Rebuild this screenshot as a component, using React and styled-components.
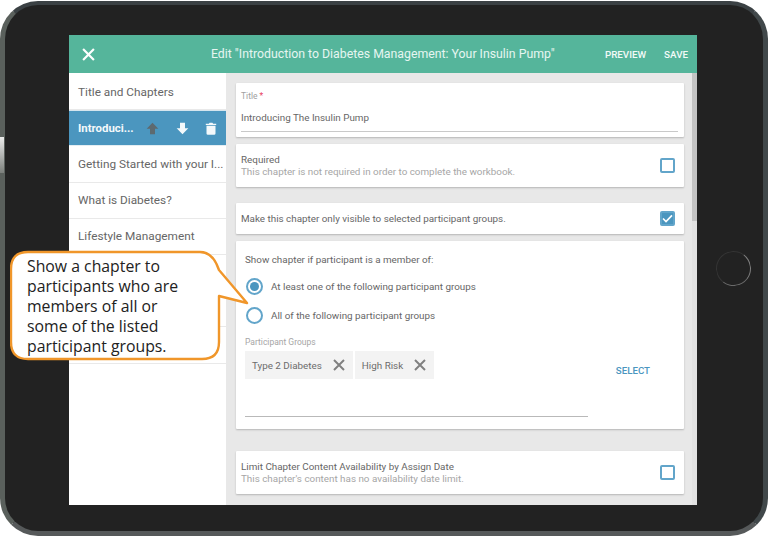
import React from "react";
import styled, { createGlobalStyle } from "styled-components";

const Global = createGlobalStyle`
  html, body { margin: 0; padding: 0; background: #fff; overflow: hidden; }
  * { box-sizing: border-box; }
  #root { width: 768px; height: 537px; padding-top: 1px; font-family: Roboto, sans-serif; }
`;

const Tablet = styled.div`
  position: relative;
  width: 768px;
  height: 535px;
  padding: 30px 66px 26px 64px;
  background: #222222;
  border-style: solid;
  border-width: 4px 5px 5px 5px;
  border-color: #3b4144 #41484a #56595a #5a605c;
  border-radius: 38px;
`;

const SideGlint = styled.div`
  position: absolute;
  left: -5px;
  top: 132px;
  width: 4px;
  height: 36px;
  background: linear-gradient(#ececec, #7b7f7b);
`;

const HomeButton = styled.div`
  position: absolute;
  left: 711px;
  top: 246px;
  width: 35px;
  height: 35px;
  border-radius: 50%;
  border: 1.5px solid #343434;
  border-right-color: #7d7d7d;
  border-bottom-color: #6a6a6a;
  transform: rotate(-8deg);
`;

const Screen = styled.div`
  width: 628px;
  height: 470px;
  display: flex;
  flex-direction: column;
  overflow: hidden;
  background: #e8e8e8;
`;

const Header = styled.header`
  flex: 0 0 38px;
  display: flex;
  align-items: center;
  background: #55b59b;
  color: #fff;
`;

const CloseButton = styled.div`
  flex: 0 0 39px;
  display: flex;
  justify-content: center;
  color: #fff;
`;

const HeaderTitle = styled.div`
  flex: 1;
  padding-left: 103px;
  font-size: 12.3px;
  white-space: nowrap;
  color: #e6f5f1;
`;

const HeaderAction = styled.div`
  font-size: 9.8px;
  font-weight: 500;
  margin-right: ${(p) => p.$mr}px;
  color: #f2faf8;
`;

const Body = styled.div`
  flex: 1;
  display: flex;
  min-height: 0;
`;

const Sidebar = styled.nav`
  flex: 0 0 157px;
  width: 157px;
  min-width: 0;
  padding-top: 1px;
  background: #fff;
`;

const NavRow = styled.div`
  height: 36.2px;
  display: flex;
  align-items: center;
  padding: 0 4px 0 9px;
  font-size: 11.8px;
  color: #666;
  border-bottom: 1px solid #e9e9e9;
  white-space: nowrap;
  overflow: hidden;
`;

const ActiveRow = styled(NavRow)`
  background: #4b96bf;
  color: #f4f9fb;
  font-weight: 700;
  border-bottom: 1px solid #e4eef3;
  border-top: 1px solid #d5e5ee;
`;

const ActiveLabel = styled.span`
  flex: 0 0 56px;
  font-size: 11.4px;
`;

const RowIcons = styled.div`
  display: flex;
  gap: 16.5px;
  margin-left: 12px;
`;

const Main = styled.main`
  position: relative;
  flex: 1;
  min-width: 0;
  padding: 10px 13px 0 10px;
  display: flex;
  flex-direction: column;
  background: #e8e8e8;
  overflow: hidden;
`;

const Scrollbar = styled.div`
  position: absolute;
  right: 0;
  top: 0;
  bottom: 0;
  width: 5px;
  background: #e2e2e2;
  &::after {
    content: "";
    display: block;
    height: 148px;
    background: #c4c4c4;
  }
`;

const Card = styled.section`
  flex: none;
  background: #fff;
  border-radius: 1px;
  box-shadow: 0 1px 2px rgba(0, 0, 0, 0.22);
  margin-bottom: ${(p) => p.$mb}px;
`;

const TitleCard = styled(Card)`
  height: 54px;
  padding: 8px 6px 0 5px;
`;

const FieldLabel = styled.div`
  font-size: 8.5px;
  color: #a0a0a0;
  line-height: 11px;
`;

const Req = styled.span`
  color: #e8415f;
`;

const FieldValue = styled.div`
  font-size: 9.85px;
  color: #666;
  line-height: 13px;
  margin-top: 9px;
  padding-bottom: 7px;
  border-bottom: 1px solid #c9c9c9;
`;

const ToggleCard = styled(Card)`
  height: ${(p) => p.$h}px;
  display: flex;
  align-items: center;
  justify-content: space-between;
  padding: 0 9px 0 5px;
`;

const ToggleMain = styled.div`
  font-size: 9.85px;
  line-height: 13px;
  color: #666;
`;

const ToggleSub = styled.div`
  font-size: 9.85px;
  line-height: 12.5px;
  color: #a6a6a6;
`;

const Checkbox = styled.div`
  width: 15px;
  height: 15px;
  border: 2px solid #62a5ca;
  border-radius: 2px;
  background: ${(p) => (p.$on ? "#4b96bf" : "#fff")};
  display: flex;
  align-items: center;
  justify-content: center;
`;

const GroupCard = styled(Card)`
  height: 188px;
  padding: 12px 9px 0 9px;
`;

const GroupHeading = styled.div`
  font-size: 9.85px;
  line-height: 13px;
  color: #666;
  margin-bottom: 12px;
`;

const RadioRow = styled.div`
  display: flex;
  align-items: center;
  gap: 8px;
  height: 17px;
  margin-bottom: 12px;
  margin-left: 1px;
  font-size: 9.85px;
  color: #666;
`;

const Radio = styled.div`
  width: 17px;
  height: 17px;
  border-radius: 50%;
  border: 2px solid #62a5ca;
  display: flex;
  align-items: center;
  justify-content: center;
  &::after {
    content: "";
    display: ${(p) => (p.$on ? "block" : "none")};
    width: 9px;
    height: 9px;
    border-radius: 50%;
    background: #4b96bf;
  }
`;

const GroupsLabel = styled.div`
  font-size: 8.5px;
  line-height: 11px;
  color: #a6a6a6;
  margin-top: 13px;
`;

const PickerRow = styled.div`
  display: flex;
  align-items: flex-start;
  justify-content: space-between;
  margin-top: 3px;
`;

const PickerBox = styled.div`
  width: 343px;
  height: 66px;
  border-bottom: 1px solid #b9b9b9;
  display: flex;
  align-items: flex-start;
  gap: 2px;
`;

const Chip = styled.div`
  height: 28px;
  background: #f3f3f3;
  display: flex;
  align-items: center;
  padding: 0 8px 0 7px;
  gap: 11px;
  font-size: 9.85px;
  color: #6c6c6c;
`;

const SelectLink = styled.div`
  font-size: 9.7px;
  font-weight: 500;
  color: #4b96bf;
  margin: 14px 25px 0 0;
`;

const Callout = styled.div`
  position: absolute;
  left: 5px;
  top: 243px;
  width: 240px;
  height: 115px;
`;

const CalloutShape = styled.svg`
  position: absolute;
  inset: 0;
`;

const CalloutText = styled.div`
  position: relative;
  padding: 7.5px 0 0 17px;
  font-family: "Open Sans", sans-serif;
  font-size: 15.8px;
  line-height: 20px;
  color: #222;
  white-space: nowrap;
`;

const X = ({ s, w, c }) => (
  <svg width={s} height={s} viewBox="0 0 12 12">
    <path d="M1 1 11 11M11 1 1 11" stroke={c} strokeWidth={w} fill="none" />
  </svg>
);

const Arrow = ({ down, c }) => (
  <svg width="13" height="13" viewBox="0 0 12 12" style={{ transform: down ? "rotate(180deg)" : "none" }}>
    <path d="M6 .8 11.4 6.2H8.3V11.4H3.7V6.2H.6Z" fill={c} />
  </svg>
);

const Trash = () => (
  <svg width="12" height="13" viewBox="0 0 12 13">
    <path d="M1.5 3.8H10.5V11.4A1.4 1.4 0 0 1 9.100 12.800H2.900A1.400 1.400 0 0 1 1.500 11.400ZM.8 1.800H3.800L4.600.8H7.400L8.200 1.800H11.200V3H.8Z" fill="#f4f9fb" />
  </svg>
);

const Check = () => (
  <svg width="11" height="9" viewBox="0 0 11 9">
    <path d="M1 4.500 4 7.500 10 1.300" stroke="#fff" strokeWidth="1.700" fill="none" />
  </svg>
);

export default function App() {
  return (
    <>
      <Global />
      <Tablet>
        <SideGlint />
        <HomeButton />
        <Screen>
          <Header>
            <CloseButton><X s={13} w={2} c="#fff" /></CloseButton>
            <HeaderTitle>Edit "Introduction to Diabetes Management: Your Insulin Pump"</HeaderTitle>
            <HeaderAction $mr={18}>PREVIEW</HeaderAction>
            <HeaderAction $mr={9}>SAVE</HeaderAction>
          </Header>
          <Body>
            <Sidebar>
              <NavRow>Title and Chapters</NavRow>
              <ActiveRow>
                <ActiveLabel>Introduci...</ActiveLabel>
                <RowIcons>
                  <Arrow c="#5d6a70" />
                  <Arrow down c="#f4f9fb" />
                  <Trash />
                </RowIcons>
              </ActiveRow>
              <NavRow>Getting Started with your I...</NavRow>
              <NavRow>What is Diabetes?</NavRow>
              <NavRow>Lifestyle Management</NavRow>
              <NavRow />
              <NavRow />
              <NavRow />
            </Sidebar>
            <Main>
              <TitleCard $mb={7}>
                <FieldLabel>Title <Req>*</Req></FieldLabel>
                <FieldValue>Introducing The Insulin Pump</FieldValue>
              </TitleCard>
              <ToggleCard $h={43} $mb={16}>
                <div>
                  <ToggleMain>Required</ToggleMain>
                  <ToggleSub>This chapter is not required in order to complete the workbook.</ToggleSub>
                </div>
                <Checkbox />
              </ToggleCard>
              <ToggleCard $h={31} $mb={7}>
                <ToggleMain>Make this chapter only visible to selected participant groups.</ToggleMain>
                <Checkbox $on><Check /></Checkbox>
              </ToggleCard>
              <GroupCard $mb={22}>
                <GroupHeading>Show chapter if participant is a member of:</GroupHeading>
                <RadioRow><Radio $on />At least one of the following participant groups</RadioRow>
                <RadioRow><Radio />All of the following participant groups</RadioRow>
                <GroupsLabel>Participant Groups</GroupsLabel>
                <PickerRow>
                  <PickerBox>
                    <Chip>Type 2 Diabetes<X s={12} w={2} c="#808080" /></Chip>
                    <Chip>High Risk<X s={12} w={2} c="#808080" /></Chip>
                  </PickerBox>
                  <SelectLink>SELECT</SelectLink>
                </PickerRow>
              </GroupCard>
              <ToggleCard $h={43} $mb={0}>
                <div>
                  <ToggleMain>Limit Chapter Content Availability by Assign Date</ToggleMain>
                  <ToggleSub>This chapter's content has no availability date limit.</ToggleSub>
                </div>
                <Checkbox />
              </ToggleCard>
              <Scrollbar />
            </Main>
          </Body>
        </Screen>
        <Callout>
          <CalloutShape width="240" height="115" viewBox="0 0 240 115">
            <path
              d="M18 4H190Q203 4 209 22L237 55 209 48V94Q209 111 192 111H18Q1 111 1 94V21Q1 4 18 4Z"
              fill="#fff"
              stroke="#f0962a"
              strokeWidth="2.4"
              strokeLinejoin="round"
            />
          </CalloutShape>
          <CalloutText>
            Show a chapter to<br />
            participants who are<br />
            members of all or<br />
            some of the listed<br />
            participant groups.
          </CalloutText>
        </Callout>
      </Tablet>
    </>
  );
}
